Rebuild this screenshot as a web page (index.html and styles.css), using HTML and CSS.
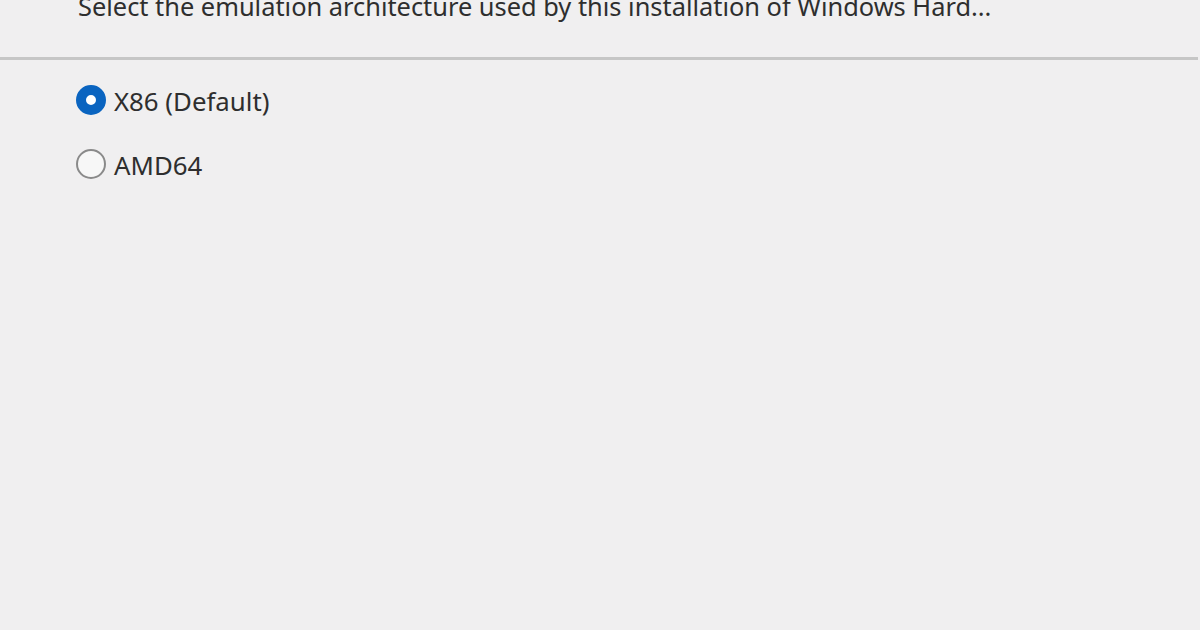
FILE: index.html
```html
<!DOCTYPE html>
<html>
<head>
<meta charset="utf-8">
<link rel="stylesheet" href="styles.css">
</head>
<body>
<div class="page">
  <div class="header">
    <p class="desc">Select the emulation architecture used by this installation of Windows Hard...</p>
  </div>
  <div class="options">
    <label class="option">
      <span class="radio checked"></span>
      <span class="label">X86 (Default)</span>
    </label>
    <label class="option">
      <span class="radio"></span>
      <span class="label">AMD64</span>
    </label>
  </div>
</div>
</body>
</html>
```
FILE: styles.css
```css
html, body {
  margin: 0;
  padding: 0;
  background: #f0eff0;
}
.page {
  width: 1200px;
  height: 630px;
  overflow: hidden;
  font-family: "Noto Sans", "Open Sans", sans-serif;
  color: #2e2e2e;
}
.header {
  height: 57px;
  width: 1198px;
  border-bottom: 3px solid #c6c6c6;
  box-sizing: content-box;
  overflow: hidden;
}
.desc {
  margin: -10px 0 0 78px;
  font-size: 25.4px;
  line-height: 32px;
  white-space: nowrap;
}
.options {
  padding: 25px 0 0 76px;
  display: flex;
  flex-direction: column;
  gap: 34px;
}
.option {
  display: flex;
  align-items: center;
  gap: 8px;
  height: 30px;
}
.radio {
  width: 30px;
  height: 30px;
  box-sizing: border-box;
  border-radius: 50%;
  border: 2px solid #8a8a8a;
  background: #f7f7f7;
}
.radio.checked {
  border: 10px solid #0a64c0;
  background: #ffffff;
}
.label {
  font-size: 25.8px;
  line-height: 30px;
  padding-top: 2px;
}
```
